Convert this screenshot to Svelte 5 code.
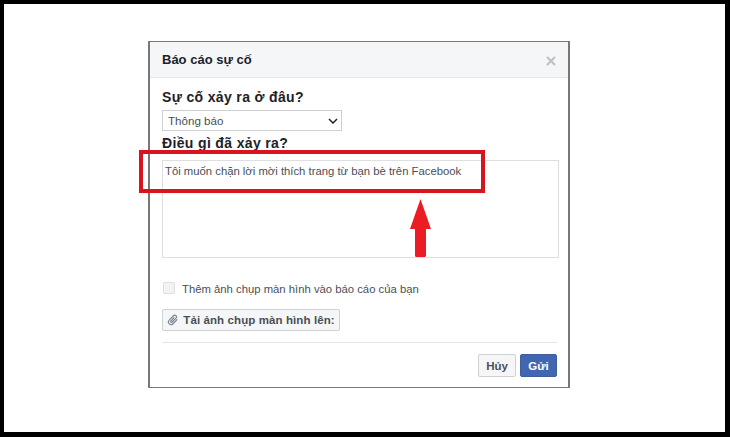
<script lang="ts">
	let place = $state('Thông báo');
	let story = $state('Tôi muốn chặn lời mời thích trang từ bạn bè trên Facebook');
	let withShot = $state(false);
</script>

<div class="frame">
	<form class="modal" onsubmit={(event) => event.preventDefault()}>
		<header>
			<h2>Báo cáo sự cố</h2>
			<svg class="close" viewBox="0 0 10 10" width="10" height="10" aria-label="Đóng">
				<path d="M1 1l8 8M9 1l-8 8" fill="none" stroke="#bcc0c6" stroke-width="2" />
			</svg>
		</header>

		<div class="body">
			<label class="field" for="place">Sự cố xảy ra ở đâu?</label>
			<div class="select-wrap">
				<select id="place" bind:value={place}>
					<option>Thông báo</option>
				</select>
				<svg viewBox="0 0 10 6" width="10" height="6" aria-hidden="true">
					<path d="M1 1l4 4 4-4" fill="none" stroke="#222" stroke-width="1.5" />
				</svg>
			</div>

			<label class="field second" for="story">Điều gì đã xảy ra?</label>
			<textarea id="story" bind:value={story}></textarea>

			<label class="check">
				<input type="checkbox" bind:checked={withShot} />
				<span>Thêm ảnh chụp màn hình vào báo cáo của bạn</span>
			</label>

			<button type="button" class="upload">
				<svg viewBox="0 0 14 14" width="12" height="12" aria-hidden="true">
					<path
						d="M12 6.200L7 11.400a3 3 0 0 1-4.400-4.200l5-5.200a2 2 0 0 1 2.900 2.800L5.800 9.600a1 1 0 0 1-1.400-1.400L8.600 4"
						fill="none"
						stroke="#7f8793"
						stroke-width="1.4"
					/>
				</svg>
				Tải ảnh chụp màn hình lên:
			</button>

			<footer>
				<button type="button" class="cancel">Hủy</button>
				<button type="submit" class="send">Gửi</button>
			</footer>
		</div>
	</form>

	<div class="callout"></div>
	<svg class="arrow" viewBox="0 0 21 58" width="21" height="58" aria-hidden="true">
		<path d="M10.500 0L21 30h-5v26.500q0 1.500-1.500 1.500h-8q-1.500 0-1.500-1.500V30H0z" fill="#ec1c24" />
	</svg>
</div>

<style>
	:global(body) {
		margin: 0;
		background: #000;
	}
	.frame {
		position: relative;
		box-sizing: border-box;
		width: 730px;
		height: 437px;
		padding: 37px 155px 44px 144px;
		border-style: solid;
		border-color: #000;
		border-width: 4px 5px 5px 4px;
		background: #fff;
		font-family: 'Liberation Sans', Arial, sans-serif;
		color: #1d2129;
	}
	.modal {
		box-sizing: border-box;
		width: 422px;
		height: 347px;
		border-style: solid;
		border-color: #777;
		border-width: 1px 2px;
		background: #fff;
	}
	header {
		box-sizing: border-box;
		height: 36px;
		padding: 0 12px;
		display: flex;
		align-items: center;
		justify-content: space-between;
		background: #f5f6f7;
		border-bottom: 1px solid #e5e5e5;
	}
	h2 {
		margin: 0;
		font-size: 13px;
		font-weight: bold;
	}
	.close {
		margin-top: 2px;
	}
	.body {
		padding: 10px 12px 0;
		display: flex;
		flex-direction: column;
		align-items: flex-start;
	}
	.field {
		font-size: 14px;
		font-weight: bold;
		letter-spacing: 0.35px;
		line-height: 19px;
		height: 22px;
	}
	.second {
		height: 29px;
		line-height: 24px;
	}
	.select-wrap {
		position: relative;
		width: 180px;
		height: 21px;
	}
	.select-wrap svg {
		position: absolute;
		right: 4px;
		top: 8px;
		pointer-events: none;
	}
	select {
		appearance: none;
		box-sizing: border-box;
		width: 100%;
		height: 100%;
		padding: 0 0 0 5px;
		border: 1px solid #ced0d4;
		border-radius: 0;
		background: #fff;
		font: 11.6px 'Liberation Sans', Arial, sans-serif;
		color: #4b4f56;
	}
	textarea {
		box-sizing: border-box;
		width: 397px;
		height: 98px;
		margin: 0;
		padding: 3px 2px;
		border: 1px solid #dddfe2;
		border-radius: 0;
		resize: none;
		font: 11.3px/15px 'Liberation Sans', Arial, sans-serif;
		color: #4b4f56;
	}
	.check {
		display: flex;
		align-items: center;
		gap: 7px;
		height: 14px;
		margin: 23px 0 0 1px;
		font-size: 11.3px;
		color: #4b4f56;
	}
	.check span {
		margin-top: 2px;
	}
	.check input {
		appearance: none;
		box-sizing: border-box;
		width: 12px;
		height: 12px;
		margin: 0;
		border: 1px solid #dddfe2;
		border-radius: 2px;
		background: #f2f3f5;
	}
	button {
		box-sizing: border-box;
		font-family: inherit;
		font-size: 11.5px;
		font-weight: bold;
		border-radius: 2px;
		padding: 0;
	}
	.upload {
		display: flex;
		align-items: center;
		justify-content: center;
		gap: 4px;
		width: 178px;
		height: 22px;
		margin-top: 14px;
		border: 1px solid #ced0d4;
		background: #f5f6f7;
		color: #4b4f56;
		letter-spacing: 0.1px;
	}
	footer {
		box-sizing: border-box;
		align-self: stretch;
		display: flex;
		justify-content: flex-end;
		gap: 4px;
		width: 395px;
		margin-top: 11px;
		padding: 11px 0 0;
		border-top: 1px solid #e5e5e5;
	}
	.cancel,
	.send {
		width: 38px;
		height: 23px;
	}
	.cancel {
		border: 1px solid #ced0d4;
		background: #f5f6f7;
		color: #4b4f56;
	}
	.send {
		width: 37px;
		border: 1px solid #3f5e9e;
		background: #4267b2;
		color: #fff;
	}
	.callout {
		position: absolute;
		left: 135px;
		top: 146px;
		box-sizing: border-box;
		width: 346px;
		height: 43px;
		border: 4px solid #d8141f;
	}
	.arrow {
		position: absolute;
		left: 406px;
		top: 195px;
	}
</style>
